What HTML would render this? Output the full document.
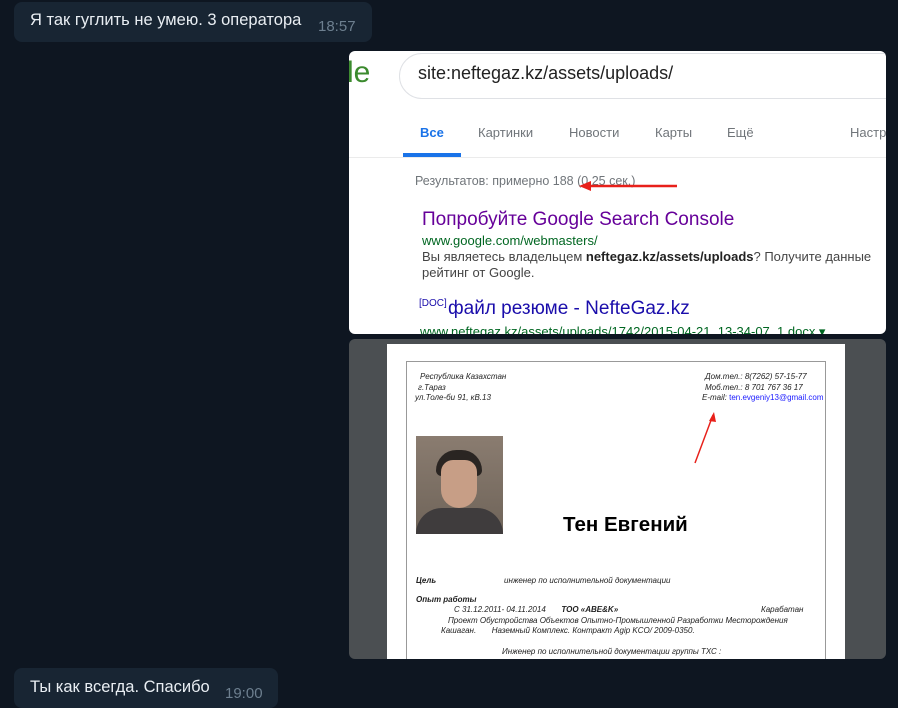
<!DOCTYPE html>
<html><head><meta charset="utf-8">
<style>
*{margin:0;padding:0;box-sizing:border-box}
body{width:898px;height:700px;background:#0e1621;position:relative;overflow:hidden;font-family:"Liberation Sans","DejaVu Sans",sans-serif}
.a{position:absolute;white-space:nowrap}
.bub{position:absolute;background:#182533;border-radius:8px}
.msg{color:#e9eef3;font-size:16.5px}
.tm{color:#6d7f8f;font-size:15px}
.g{color:#70757a}
.d{font-style:italic;font-size:8px;color:#222}
</style></head><body>
<div class="bub" style="left:14px;top:2px;width:358px;height:40px"></div>
<div class="a msg" style="left:30px;top:11px">Я так гуглить не умею. 3 оператора</div>
<div class="a tm" style="left:318px;top:18px">18:57</div>

<div class="a" style="left:349px;top:51px;width:537px;height:283px;background:#fff;border-radius:6px;overflow:hidden">
 <div class="a" style="left:-2px;top:5px;font-size:30px;color:#3b8a2e">le</div>
 <div class="a" style="left:50px;top:2px;width:520px;height:46px;border:1px solid #dfe1e5;border-radius:24px"></div>
 <div class="a" style="left:69px;top:12px;font-size:18px;color:#222">site:neftegaz.kz/assets/uploads/</div>
 <div class="a" style="left:71px;top:74px;font-size:13px;color:#1a73e8;font-weight:bold">Все</div>
 <div class="a" style="left:54px;top:102px;width:58px;height:4px;background:#1a73e8"></div>
 <div class="a g" style="left:129px;top:74px;font-size:13px">Картинки</div>
 <div class="a g" style="left:220px;top:74px;font-size:13px">Новости</div>
 <div class="a g" style="left:306px;top:74px;font-size:13px">Карты</div>
 <div class="a g" style="left:378px;top:74px;font-size:13px">Ещё</div>
 <div class="a g" style="left:501px;top:74px;font-size:13px">Настр</div>
 <div class="a" style="left:0;top:106px;width:537px;height:1px;background:#ebebeb"></div>
 <div class="a g" style="left:66px;top:123px;font-size:12.5px">Результатов: примерно 188 (0,25 сек.)</div>
 <svg class="a" style="left:230px;top:127px" width="100" height="14"><line x1="6" y1="8" x2="98" y2="8" stroke="#e8201a" stroke-width="2.5"/><path d="M0 8 L12 3 L12 13Z" fill="#e8201a"/></svg>
 <div class="a" style="left:73px;top:158px;font-size:19px;color:#660099">Попробуйте Google Search Console</div>
 <div class="a" style="left:73px;top:182px;font-size:13px;color:#006621">www.google.com/webmasters/</div>
 <div class="a" style="left:73px;top:198px;font-size:13px;color:#444">Вы являетесь владельцем <b style="color:#222">neftegaz.kz/assets/uploads</b>? Получите данные</div>
 <div class="a" style="left:73px;top:214px;font-size:13px;color:#444">рейтинг от Google.</div>
 <div class="a" style="left:70px;top:247px;font-size:10px;color:#1a0dab">[DOC]</div>
 <div class="a" style="left:99px;top:247px;font-size:19px;color:#1a0dab">файл резюме - NefteGaz.kz</div>
 <div class="a" style="left:71px;top:273px;font-size:13px;color:#006621">www.neftegaz.kz/assets/uploads/1742/2015-04-21_13-34-07_1.docx ▾</div>
</div>

<div class="a" style="left:349px;top:339px;width:537px;height:320px;background:#4b4f52;border-radius:6px;overflow:hidden">
 <div class="a" style="left:38px;top:5px;width:458px;height:320px;background:#fff"></div>
 <div class="a" style="left:57px;top:22px;width:420px;height:310px;border:1px solid #999"></div>
 <div class="a d" style="left:71px;top:33px">Республика Казахстан</div>
 <div class="a d" style="left:69px;top:44px">г.Тараз</div>
 <div class="a d" style="left:66px;top:54px">ул.Толе-би 91, кВ.13</div>
 <div class="a d" style="left:356px;top:33px">Дом.тел.: 8(7262) 57-15-77</div>
 <div class="a d" style="left:356px;top:44px">Моб.тел.:  8 701 767 36 17</div>
 <div class="a d" style="left:353px;top:54px">E-mail:   <span style="color:#1a1aff;font-style:normal">ten.evgeniy13@gmail.com</span></div>
 <svg class="a" style="left:340px;top:70px" width="30" height="60"><line x1="6" y1="54" x2="24" y2="6" stroke="#e8201a" stroke-width="1.5"/><path d="M25 3 L20 12 L27 13Z" fill="#e8201a"/></svg>
 <div class="a" style="left:67px;top:97px;width:87px;height:98px;background:linear-gradient(#8a7c70,#6f6459)">
  <div class="a" style="left:20px;top:14px;width:46px;height:26px;background:#2a2522;border-radius:22px 22px 6px 6px"></div>
  <div class="a" style="left:25px;top:24px;width:36px;height:48px;background:#c79e86;border-radius:12px 12px 18px 18px"></div>
  <div class="a" style="left:0;top:72px;width:87px;height:26px;background:#3f3c3d;border-radius:30px 30px 0 0"></div>
 </div>
 <div class="a" style="left:214px;top:174px;font-size:20.5px;font-weight:bold;color:#000">Тен Евгений</div>
 <div class="a d" style="left:67px;top:237px;font-weight:bold">Цель</div>
 <div class="a d" style="left:155px;top:237px">инженер по исполнительной документации</div>
 <div class="a d" style="left:67px;top:256px;font-weight:bold">Опыт работы</div>
 <div class="a d" style="left:105px;top:266px">С  31.12.2011- 04.11.2014 &nbsp;&nbsp;&nbsp;&nbsp;&nbsp;&nbsp;<b>ТОО «ABE&amp;K»</b></div>
 <div class="a d" style="left:412px;top:266px">Карабатан</div>
 <div class="a d" style="left:99px;top:277px">Проект Обустройства Объектов Опытно-Промышленной  Разработки Месторождения</div>
 <div class="a d" style="left:92px;top:287px">Кашаган. &nbsp;&nbsp;&nbsp;&nbsp;&nbsp;&nbsp;Наземный Комплекс. Контракт Agip KCO/ 2009-0350.</div>
 <div class="a d" style="left:153px;top:308px">Инженер по исполнительной документации  группы  ТХС :</div>
</div>

<div class="bub" style="left:14px;top:668px;width:264px;height:40px"></div>
<div class="a msg" style="left:30px;top:678px">Ты как всегда. Спасибо</div>
<div class="a tm" style="left:225px;top:685px">19:00</div>
</body></html>
